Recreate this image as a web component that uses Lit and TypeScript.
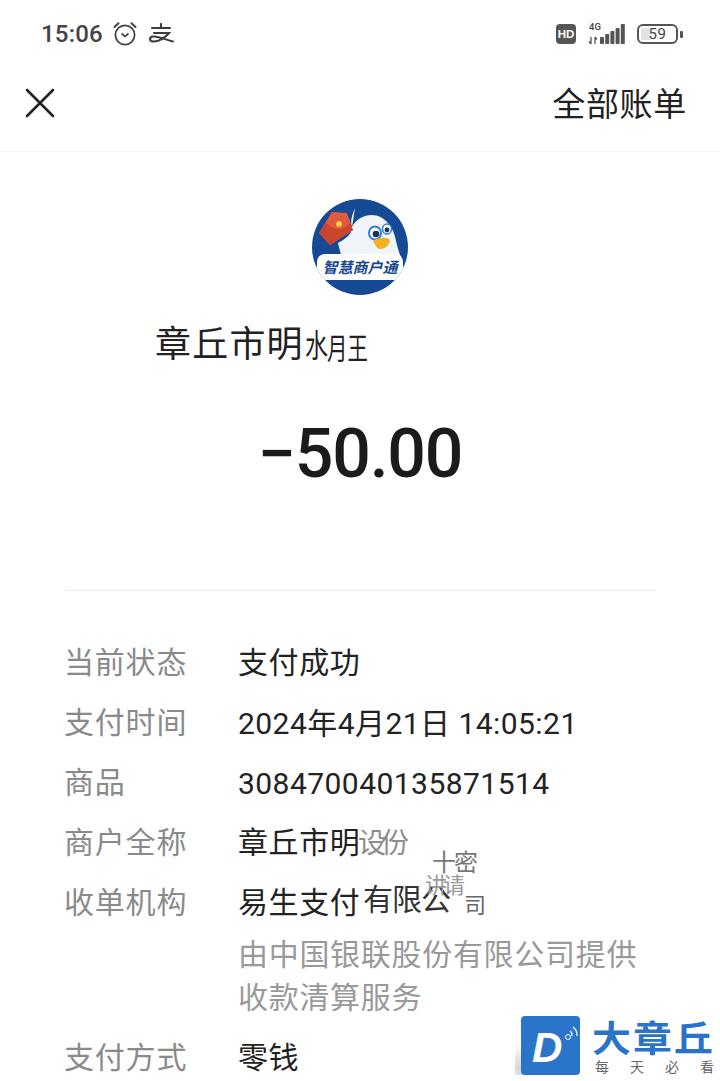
import { LitElement, html, css, svg } from "lit";
import { customElement } from "lit/decorators.js";

const CJK = `"Noto Sans CJK SC", "Noto Sans", sans-serif`;

@customElement("app-root")
export class AppRoot extends LitElement {
  static styles = css`
    :host { display: block; width: 720px; height: 1081px; overflow: hidden; position: relative; background: #fff; font-family: "Noto Sans CJK SC", "Noto Sans", sans-serif; color: #1c1c1c; }
    .status { height: 68px; display: flex; align-items: center; padding: 0 37px 0 41px; color: #444; }
    .time { font-family: Roboto, sans-serif; font-weight: 500; font-size: 24px; letter-spacing: .2px; margin-right: 9px; }
    .status svg { display: block; flex: none; }
    .alipay { margin-left: 11px; }
    .spacer { flex: 1; }
    .hd { width: 20px; height: 20px; border-radius: 4px; background: #555; color: #fff; font: 700 11.5px "Liberation Sans", sans-serif; display: flex; align-items: center; justify-content: center; margin-right: 12px; }
    .net { margin-right: 11px; }
    .batt { width: 41px; height: 20px; box-sizing: border-box; border: 2.5px solid #555; border-radius: 6px; font: 400 15px Roboto, sans-serif; color: #444; display: flex; align-items: center; justify-content: center; background: linear-gradient(90deg, #e2e2e2 0 30%, #fff 30%); background-clip: content-box; padding: 2px; letter-spacing: .5px; }
    .tip { width: 3px; height: 7px; background: #555; margin-left: 2px; border-radius: 1px; }
    .nav { height: 83px; box-sizing: content-box; display: flex; align-items: flex-start; justify-content: space-between; padding: 0 33px 0 25px; border-bottom: 1px solid #f3f3f3; }
    .nav svg { margin-top: 20px; display: block; }
    .all { font-size: 33px; line-height: 44px; letter-spacing: .7px; color: #222; margin-top: 12px; }
    .logo { display: block; margin: 47px auto 0; }
    .name { position: relative; margin: 22px 0 0 155px; font-size: 36px; line-height: 48px; height: 48px; letter-spacing: 1.2px; color: #222; }
    .amount { margin-top: 49px; text-align: center; font-family: Roboto, sans-serif; font-weight: 500; font-size: 68px; line-height: 80px; letter-spacing: -1.2px; color: #1b1b1b; }
    .rule { height: 1px; background: #e9e9e9; margin: 96px 64px 0 65px; }
    .rows { margin: 43px 0 0 64px; position: relative; }
    .row { display: grid; grid-template-columns: 174px 1fr; height: 60px; align-items: center; font-size: 30px; line-height: 53px; }
    .row > span { padding-bottom: 7px; }
    .label { color: #8a8a8a; letter-spacing: .8px; }
    .val { color: #222; letter-spacing: .6px; white-space: nowrap; position: relative; }
    .row > .num { font-family: Roboto, "Noto Sans CJK SC", sans-serif; letter-spacing: .45px; padding-bottom: 0; line-height: 60px; }
    .sub { margin: -3px 0 12px 174px; color: #999; font-size: 30px; line-height: 43px; width: 410px; letter-spacing: .7px; }
    .sq { position: absolute; white-space: nowrap; transform-origin: left center; letter-spacing: 0; }
    .s1 { left: 150px; top: 6px; font-size: 32px; line-height: 40px; transform: scaleX(.72); }
    .s2 { left: 172px; top: 9px; font-size: 30px; line-height: 40px; transform: scaleX(.68); }
    .g1 { left: 120px; top: 7px; font-size: 28px; line-height: 40px; color: #8d8d8d; letter-spacing: -5px; }
    .g2 { left: 125px; top: 1px; font-size: 30px; line-height: 44px; letter-spacing: -1px; color: #333; }
    .g3 { left: 194px; top: -28px; font-size: 24px; line-height: 30px; color: #777; letter-spacing: -2px; }
    .g4 { left: 187px; top: -6px; font-size: 22px; line-height: 30px; color: #999; letter-spacing: -4px; }
    .g5 { left: 226px; top: 14px; font-size: 22px; line-height: 30px; color: #666; }
    .wm { position: absolute; left: 515px; top: 1016px; width: 205px; height: 59px; display: flex; background: radial-gradient(ellipse 38px 24px at 6px 52px, #d4d4d4, transparent); }
    .wm-icon { margin: 0 0 0 6px; display: block; flex: none; }
    .wm-text { margin-left: 12px; display: flex; flex-direction: column; flex: none; width: 122px; }
    .wm-title { font-size: 36px; font-weight: 700; color: #2a73c8; line-height: 40px; letter-spacing: 2px; white-space: nowrap; transform: scaleX(1.08); transform-origin: left center; }
    .wm-sub { font-size: 14px; color: #666; line-height: 18px; margin: 1px 0 0 3px; white-space: nowrap; display: flex; justify-content: space-between; }
  `;

  private alarm() {
    return html`<svg width="26" height="26" viewBox="0 0 26 26" fill="none" stroke="#444">
      <circle cx="13" cy="14" r="9.6" stroke-width="1.8"/>
      <path d="M9.5 12.5 13 15.5 16.5 12.5" stroke-width="1.7"/>
      <path d="M2.5 6 6.5 2.2M23.5 6 19.5 2.2" stroke-width="2" stroke-linecap="round"/>
    </svg>`;
  }
  private alipay() {
    return html`<svg class="alipay" width="25" height="22" viewBox="0 0 25 22" fill="none" stroke="#3d3d3d" stroke-width="2.1" stroke-linecap="round">
      <path d="M3 5H21M12 1V5M5 10H20C16 15 9 19 4 18.500 0 18 0 14 4 13.500 10 13 17 17 24 18.500"/>
    </svg>`;
  }
  private net() {
    const bars = [[12, 15, 7], [17.2, 12, 10], [22.4, 9, 13], [27.6, 6, 16], [32.8, 2, 20]];
    return html`<svg class="net" width="38" height="24" viewBox="0 0 38 24">
      <text x="1" y="8" font-family="Roboto, sans-serif" font-size="9.500" font-weight="500" fill="#444">4G</text>
      <path d="M3 15v7M1 19.500l2 2.500M7 22v-7M7 15l2 2.500" stroke="#555" stroke-width="1.300" fill="none"/>
      ${bars.map(([x, y, h]) => svg`<rect x=${x} y=${y} width="4" height=${h} rx=".8" fill="#555"/>`)}
    </svg>`;
  }
  private logo() {
    return html`<svg class="logo" width="96" height="96" viewBox="0 0 96 96">
      <defs><clipPath id="c"><circle cx="48" cy="48" r="48"/></clipPath></defs>
      <g clip-path="url(#c)">
        <rect width="96" height="96" fill="#174a94"/>
        <path d="M43 9C40 16 38 22 40 28 44 20 52 16 60 16 72 16 82 28 84 42 86 50 87 54 90 60H30L26 44C33 40 40 36 40 28Z" fill="#f1f5fa"/>
        <path d="M7 34 20 13 35 14 41 31 18 46Z" fill="#e25a3c"/>
        <path d="M7 34 14 24C22 31 30 33 38 24L41 31 18 46Z" fill="#c9452e"/>
        <circle cx="27" cy="25" r="3" fill="#f6c94b"/>
        <ellipse cx="63" cy="34" rx="6" ry="6.500" fill="#fff" stroke="#2f7fd0" stroke-width="2"/>
        <circle cx="64" cy="35" r="3.300" fill="#16325f"/>
        <ellipse cx="75" cy="30" rx="4.500" ry="5" fill="#fff" stroke="#2f7fd0" stroke-width="1.600"/>
        <circle cx="75" cy="31" r="2.400" fill="#16325f"/>
        <path d="M61 42C67 38 75 38 78 41 77 48 70 52 65 49Z" fill="#f3b01f"/>
        <rect x="5" y="55" width="86" height="26" rx="8" fill="#fff"/>
        <text x="48" y="74" text-anchor="middle" font-family=${CJK} font-size="15" font-weight="700" font-style="italic" fill="#17478f">智慧商户通</text>
      </g>
    </svg>`;
  }
  private wmIcon() {
    return html`<svg class="wm-icon" width="59" height="59" viewBox="0 0 59 59">
      <rect width="59" height="59" rx="4" fill="#2a75c9"/>
      <text x="11" y="46" font-family="Liberation Sans, sans-serif" font-size="42" font-weight="700" font-style="italic" fill="#fff">D</text>
      <path d="M49 15a5 5 0 0 1 2 5M52 11a10 10 0 0 1 4 9" fill="none" stroke="#fff" stroke-width="1.200"/>
      <circle cx="47" cy="21" r="2.500" fill="none" stroke="#fff" stroke-width="1"/>
    </svg>`;
  }

  render() {
    return html`
      <div class="status">
        <span class="time">15:06</span>
        ${this.alarm()}${this.alipay()}
        <span class="spacer"></span>
        <span class="hd">HD</span>${this.net()}
        <span class="batt">59</span><span class="tip"></span>
      </div>
      <div class="nav">
        <svg width="30" height="30" viewBox="0 0 30 30" stroke="#222" stroke-width="2.600" stroke-linecap="round"><path d="M2 2 28 28M28 2 2 28"/></svg>
        <span class="all">全部账单</span>
      </div>
      ${this.logo()}
      <div class="name">章丘市明<span class="sq s1">水</span><span class="sq s2">月王</span></div>
      <div class="amount">−50.00</div>
      <div class="rule"></div>
      <div class="rows">
        <div class="row"><span class="label">当前状态</span><span class="val">支付成功</span></div>
        <div class="row"><span class="label">支付时间</span><span class="val num">2024年4月21日 14:05:21</span></div>
        <div class="row"><span class="label">商品</span><span class="val num">308470040135871514</span></div>
        <div class="row"><span class="label">商户全称</span><span class="val">章丘市明<span class="sq g1">设份</span></span></div>
        <div class="row"><span class="label">收单机构</span><span class="val">易生支付<span class="sq g2">有限公</span><span class="sq g3">十密</span><span class="sq g4">讲请</span><span class="sq g5">司</span></span></div>
        <div class="sub">由中国银联股份有限公司提供收款清算服务</div>
        <div class="row"><span class="label">支付方式</span><span class="val">零钱</span></div>
      </div>
      <div class="wm">
        ${this.wmIcon()}
        <div class="wm-text"><span class="wm-title">大章丘</span><span class="wm-sub"><span>每</span><span>天</span><span>必</span><span>看</span></span></div>
      </div>
    `;
  }
}
